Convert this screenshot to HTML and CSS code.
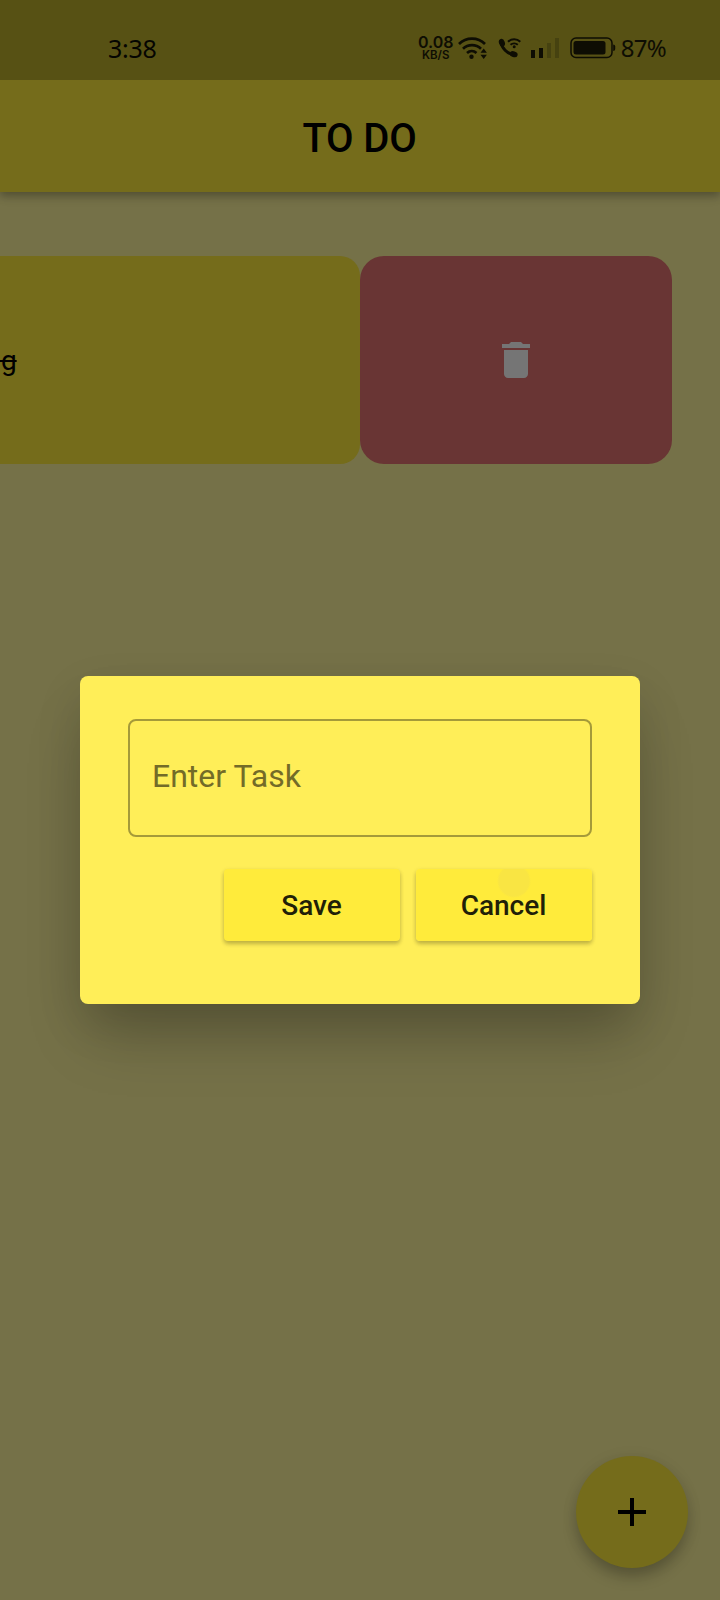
FILE: index.html
```html
<!DOCTYPE html>
<html lang="en">
<head>
<meta charset="utf-8">
<title>TO DO</title>
<link rel="stylesheet" href="styles.css">
</head>
<body>
<div class="screen">
  <header class="status">
    <span class="clock">3:38</span>
    <div class="indicators">
      <div class="speed"><span class="rate">0.08</span><span class="unit">KB/S</span></div>
      <svg class="wifi" width="30" height="24" viewBox="0 0 30 24" fill="none" stroke="currentColor" stroke-width="2.700">
        <path d="M1 8a18.500 18.500 0 0 1 26 0M5 12.700a13 13 0 0 1 18 0M9 17a7.200 7.200 0 0 1 9.500 0"/>
        <circle cx="13.500" cy="20.800" r="2.200" fill="currentColor" stroke="none"/>
        <path d="M22.500 16.800l3.200-4.300 3.200 4.300zM22.500 18.800h6.400l-3.200 4.200z" fill="currentColor" stroke="none"/>
      </svg>
      <svg class="call" width="24" height="22" viewBox="0 0 24 22" fill="none" stroke="currentColor">
        <path d="M3 4.500C3.500 11 9 17 16.500 17.800" stroke-width="3"/>
        <ellipse cx="3.900" cy="5.700" rx="2.900" ry="4" transform="rotate(-20 3.900 5.700)" fill="currentColor" stroke="none"/>
        <ellipse cx="15.700" cy="17.200" rx="4" ry="2.900" transform="rotate(18 15.700 17.200)" fill="currentColor" stroke="none"/>
        <path d="M10 4.700a9 9 0 0 1 12.300 0M12.500 7.800a5.600 5.600 0 0 1 7.300 0" stroke-width="2"/>
        <circle cx="16.200" cy="9.800" r="1.500" fill="currentColor" stroke="none"/>
      </svg>
      <svg class="signal" width="30" height="20" viewBox="0 0 30 20" fill="currentColor">
        <rect x="1" y="12" width="4" height="8"/><rect x="9" y="10" width="4" height="10"/>
        <rect x="17" y="5" width="4" height="15" opacity=".22"/><rect x="25" y="0" width="4" height="20" opacity=".22"/>
      </svg>
      <svg class="battery" width="46" height="22" viewBox="0 0 46 22" fill="none">
        <rect x="1" y="1" width="41" height="19.500" rx="5" stroke="currentColor" stroke-width="1.500"/>
        <rect x="3.500" y="4" width="32" height="13.500" rx="2.500" fill="currentColor"/>
        <path d="M43.200 7.500q2 0 2 2v2.500q0 2-2 2z" fill="currentColor"/>
      </svg>
      <span class="percent">87%</span>
    </div>
  </header>
  <div class="appbar"><h1 class="title">TO DO</h1></div>
  <main class="list">
    <div class="task"><s class="task-name">&nbsp;g</s></div>
    <div class="remove">
      <svg width="48" height="48" viewBox="0 0 24 24" fill="currentColor"><path d="M6 19c0 1.100.9 2 2 2h8c1.100 0 2-.9 2-2V7H6v12zM19 4h-3.500l-1-1h-5l-1 1H5v2h14V4z"/></svg>
    </div>
  </main>
  <button class="fab" aria-label="Add task">
    <svg width="48" height="48" viewBox="0 0 24 24" fill="currentColor"><path d="M19 13h-6v6h-2v-6H5v-2h6V5h2v6h6v2z"/></svg>
  </button>
  <div class="overlay">
    <div class="dialog">
      <div class="field">Enter Task</div>
      <div class="actions">
        <button class="btn">Save</button>
        <button class="btn btn-pressed">Cancel</button>
      </div>
    </div>
  </div>
</div>
</body>
</html>
```
FILE: styles.css
```css
* { box-sizing: border-box; }
body { margin: 0; font-family: Roboto, sans-serif; }
button { border: 0; padding: 0; font: inherit; }
svg { display: block; flex: none; }

.screen {
  position: relative;
  display: flex;
  flex-direction: column;
  width: 720px;
  height: 1600px;
  overflow: hidden;
  background: #757148;
}

.status {
  display: flex;
  justify-content: space-between;
  align-items: center;
  flex: none;
  height: 80px;
  padding: 16px 54px 0 108px;
  background: #575114;
  color: #0e0d03;
  position: relative;
  z-index: 1;
}
.clock { padding-bottom: 1px; font: 25px/32px "Noto Sans", sans-serif; color: #050501; letter-spacing: -0.3px; }
.indicators { display: flex; align-items: center; }
.speed { display: flex; flex-direction: column; align-items: center; width: 36px; font-family: Inter, sans-serif; font-weight: 600; }
.rate { font-size: 16px; line-height: 14px; }
.unit { font-size: 11.5px; line-height: 13px; }
.wifi { margin-left: 4px; }
.call { margin-left: 10px; }
.signal { margin-left: 8px; }
.battery { margin-left: 10px; }
.percent { margin-left: 5px; padding-bottom: 1px; font: 24px/32px "Noto Sans", sans-serif; letter-spacing: -0.7px; }

.appbar {
  display: flex;
  align-items: center;
  justify-content: center;
  flex: none;
  height: 112px;
  background: #756c1b;
  box-shadow: 0 4px 8px rgba(0, 0, 0, .24), 0 2px 14px rgba(0, 0, 0, .1);
}
.title { margin: 0; padding: 5px 1px 0 0; font-size: 40px; font-weight: 500; line-height: 48px; color: #000; letter-spacing: -0.2px; }

.list { display: flex; height: 208px; margin: 64px 48px 0 0; }
.task {
  display: flex;
  align-items: center;
  width: 360px;
  border-radius: 0 20px 20px 0;
  background: #756c1b;
}
.task-name { margin-left: -6px; font-size: 28px; color: #000; text-decoration-thickness: 2px; }
.remove {
  display: flex;
  align-items: center;
  justify-content: center;
  flex: 1;
  border-radius: 24px;
  background: #693534;
  color: #757575;
}

.fab {
  display: flex;
  align-items: center;
  justify-content: center;
  width: 112px;
  height: 112px;
  margin: auto 32px 32px auto;
  border-radius: 50%;
  background: #756c1b;
  color: #000;
  box-shadow: 0 10px 16px -2px rgba(0, 0, 0, .24), 0 2px 16px rgba(0, 0, 0, .08);
}

.overlay {
  position: absolute;
  inset: 80px 0 0;
  display: flex;
  align-items: center;
  justify-content: center;
}
.dialog {
  width: 560px;
  height: 328px;
  padding: 43px 48px 0;
  border-radius: 8px;
  background: #ffee58;
  box-shadow: 0 40px 60px -12px rgba(0, 0, 0, .22), 0 18px 48px rgba(0, 0, 0, .11);
}
.field {
  display: flex;
  align-items: center;
  height: 118px;
  padding: 0 22px 4px;
  border: 2px solid #a59a39;
  border-radius: 8px;
  font-size: 32px;
  color: #736b28;
}
.actions { display: flex; justify-content: flex-end; gap: 16px; margin-top: 32px; }
.btn {
  width: 176px;
  height: 72px;
  padding: 0 1px 0 0;
  border-radius: 4px;
  background: #ffeb3b;
  color: #211f08;
  font-size: 28px;
  font-weight: 500;
  box-shadow: 0 3px 4px rgba(0, 0, 0, .22), 0 1px 5px rgba(0, 0, 0, .08);
}
.btn-pressed { background: radial-gradient(circle at 98px 12px, #f9e543 15px, #ffeb3b 17px); }
```
